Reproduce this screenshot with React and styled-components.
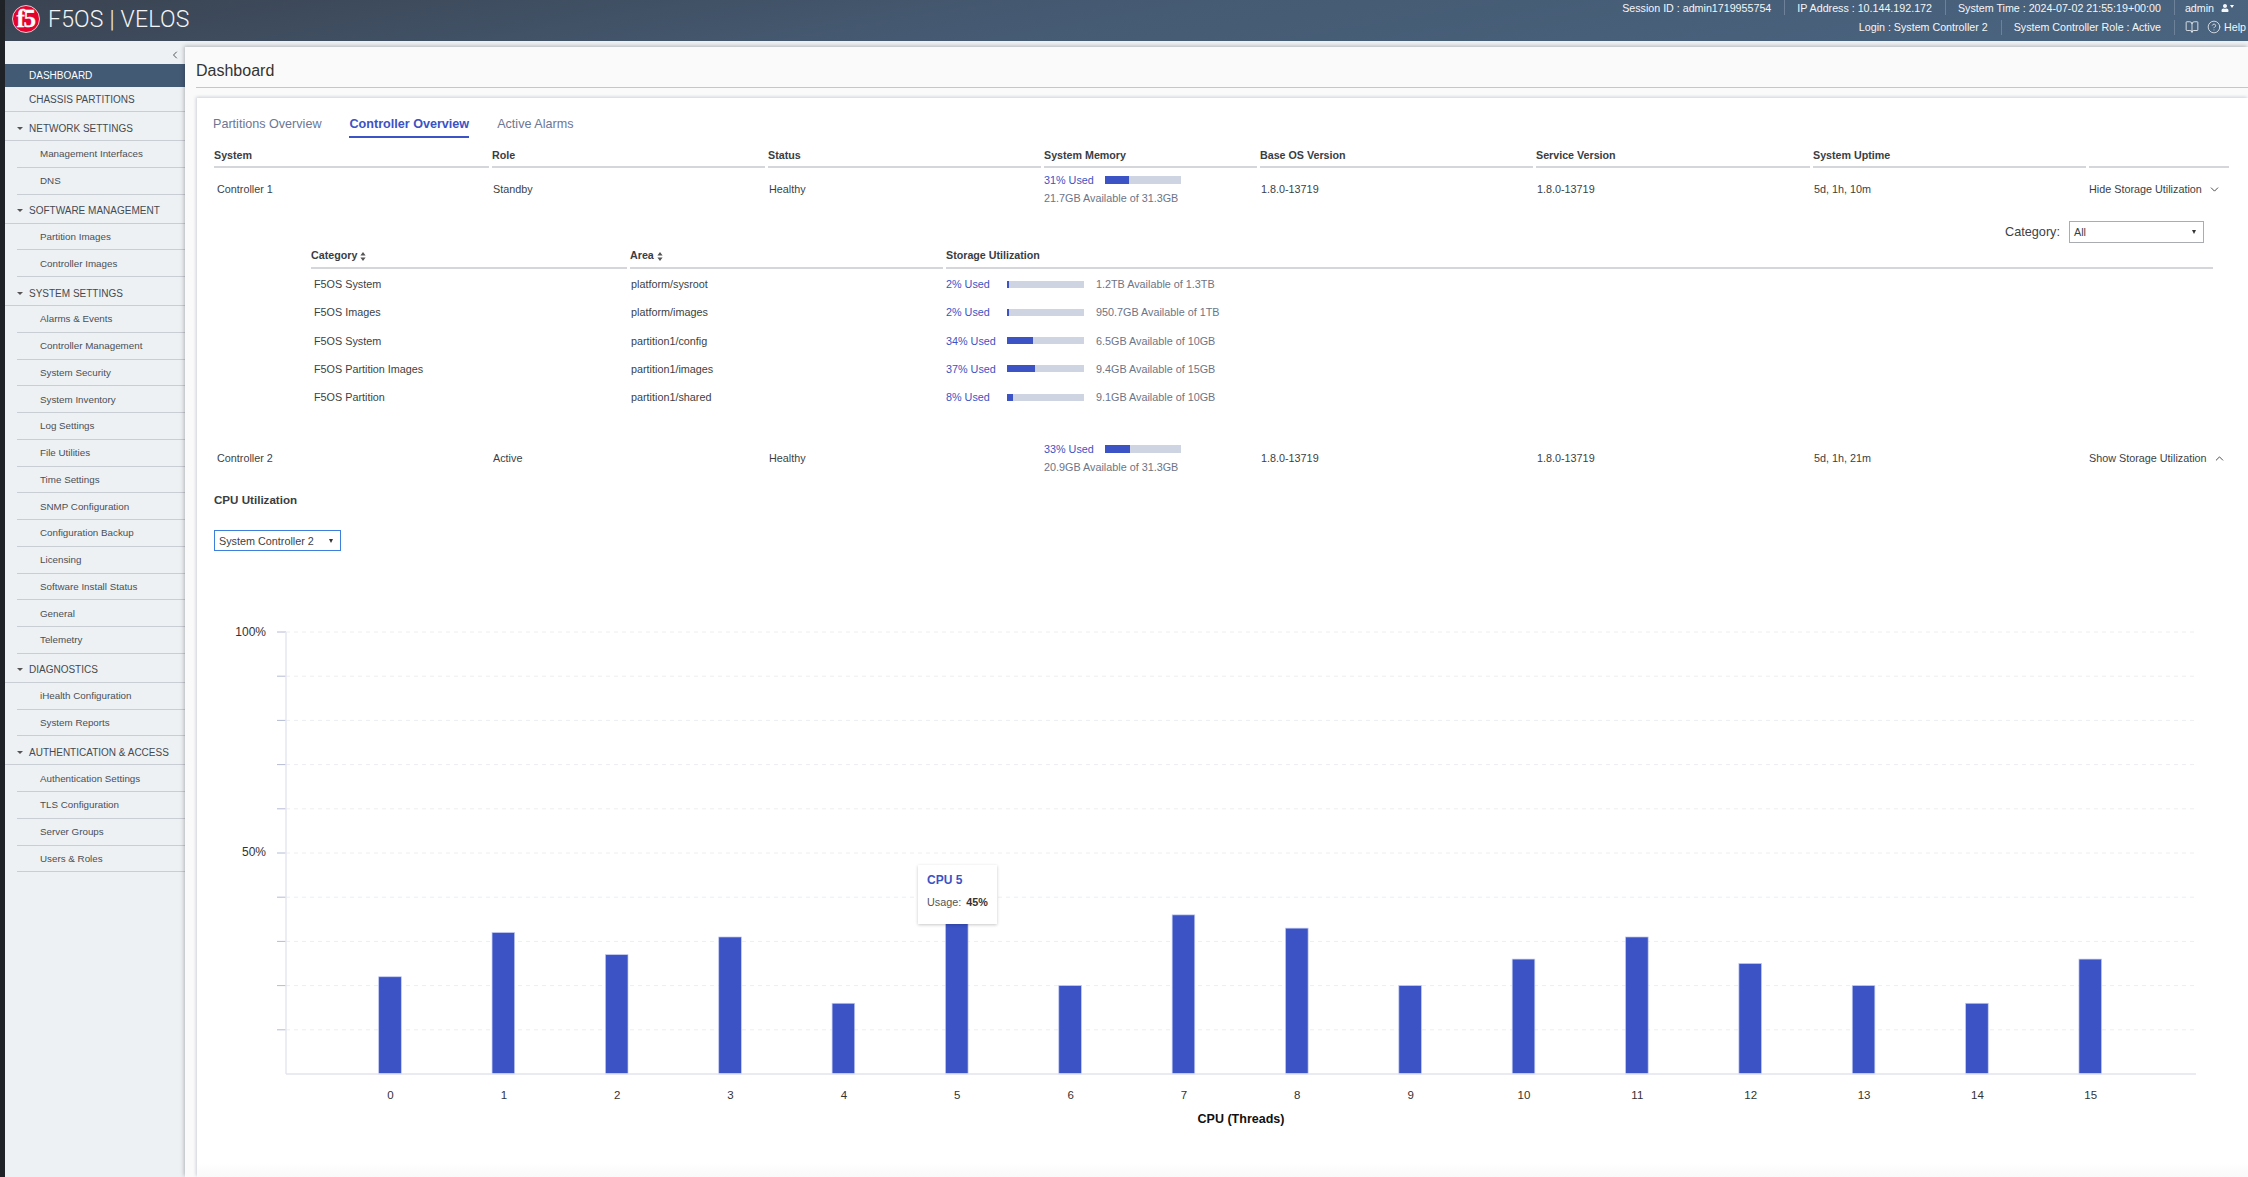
import React from 'react';
import styled, { createGlobalStyle } from 'styled-components';
import { BookOpen, ChevronDown, ChevronLeft, ChevronUp, CircleHelp } from 'lucide-react';
import { FaUser } from 'react-icons/fa';

const BLUE = '#3b53c4';

const GlobalStyle = createGlobalStyle`
  html, body { margin: 0; padding: 0; height: 100%; }
  body { font-family: "Liberation Sans", Arial, sans-serif; background: #1f2328; color: #333; overflow: hidden; }
  * { box-sizing: border-box; }
`;

const Page = styled.div`
  width: 2248px;
  height: 1177px;
  padding-left: 5px;
  display: flex;
  flex-direction: column;
  overflow: hidden;
`;

/* top bar */
const TopBar = styled.header`
  height: 41px;
  flex: none;
  display: flex;
  justify-content: space-between;
  background: linear-gradient(170deg, #3a4351 0%, #455a72 45%, #4a6480 100%);
  color: #fff;
`;

const Brand = styled.div`
  display: flex;
  align-items: center;
  padding: 0 0 3px 7px;
`;

const BrandName = styled.span`
  margin-left: 8px;
  font-family: Roboto, "Liberation Sans", sans-serif;
  font-weight: 300;
  font-size: 23px;
  letter-spacing: 0.2px;
  color: #f2f4f6;
  white-space: pre;
`;

const StatusBlock = styled.div`
  display: flex;
  flex-direction: column;
  align-items: flex-end;
  padding-right: 2px;
`;

const StatusRow = styled.div`
  display: flex;
  align-items: center;
  height: ${props => props.$height}px;
  padding-right: ${props => props.$end}px;
`;

const StatusItem = styled.span`
  display: flex;
  align-items: center;
  gap: ${props => props.$gap || 0}px;
  height: 15px;
  padding: 0 13px 0 12px;
  font-size: 10.7px;
  color: #f4f6f8;
  white-space: nowrap;
  border-left: 1px solid ${props => (props.$first ? 'transparent' : '#6d8299')};

  &:last-child { padding-right: 0; padding-left: 10px; }
`;

const UserCaret = styled.i`
  width: 0;
  height: 0;
  margin-left: -6px;
  margin-top: -3px;
  border-left: 2px solid transparent;
  border-right: 2px solid transparent;
  border-top: 3px solid #fff;
`;

const HelpIcon = styled(CircleHelp)`
  margin-left: 5px;
`;

const Body = styled.div`
  flex: 1;
  min-height: 0;
  display: flex;
  background: #eef1f4;
`;

/* side nav */
const Sidebar = styled.nav`
  width: 180px;
  flex: none;
`;

const CollapseRow = styled.div`
  height: 23px;
  display: flex;
  align-items: center;
  justify-content: flex-end;
  padding: 5px 4px 0 0;
  color: #555;
`;

const TopLink = styled.div`
  height: ${props => (props.$active ? 23 : 25)}px;
  display: flex;
  align-items: center;
  padding-left: 24px;
  font-size: 10px;
  color: ${props => (props.$active ? '#fff' : '#444a50')};
  background: ${props => (props.$active ? '#435a75' : 'transparent')};
  border-bottom: ${props => (props.$active ? 'none' : '1px solid #c9ced4')};
`;

const SectionTitle = styled.div`
  height: 29px;
  display: flex;
  align-items: center;
  padding: 4px 0 0 12px;
  font-size: 10px;
  color: #444a50;
  border-bottom: 1px solid #c9ced4;

  &::before {
    content: "";
    width: 0;
    height: 0;
    margin-right: 6px;
    border-left: 3px solid transparent;
    border-right: 3px solid transparent;
    border-top: 3px solid #555;
  }
`;

const SubLink = styled.div`
  height: 26.75px;
  margin-left: 12px;
  display: flex;
  align-items: center;
  padding-left: 23px;
  font-size: 9.8px;
  color: #4a4f55;
  border-bottom: 1px solid #c9ced4;
`;

/* main */
const Main = styled.main`
  flex: 1;
  min-width: 0;
  margin-top: 6px;
  padding-left: 11px;
  display: flex;
  flex-direction: column;
  background: #fafafa;
  box-shadow: -1px -1px 4px rgba(0, 0, 0, 0.25);
`;

const PageTitle = styled.h1`
  height: 41px;
  flex: none;
  margin: 0;
  display: flex;
  align-items: center;
  padding-top: 8px;
  font-size: 16px;
  font-weight: 400;
  color: #333;
  border-bottom: 1px solid #c4c7ca;
`;

const Card = styled.section`
  flex: 1;
  min-height: 0;
  margin: 10px 0 0 1px;
  padding-left: 17px;
  background: linear-gradient(#fff calc(100% - 14px), #f9f9f9);
  box-shadow: -1px -1px 3px rgba(70, 90, 120, 0.25);
`;

const Tabs = styled.div`
  height: 40px;
  display: flex;
  gap: 28px;
  margin-left: -1px;
`;

const Tab = styled.div`
  height: 40px;
  display: flex;
  align-items: center;
  padding-top: 13px;
  font-size: 12.6px;
  font-weight: ${props => (props.$active ? 700 : 400)};
  color: ${props => (props.$active ? BLUE : '#6b7794')};
  border-bottom: 2px solid ${props => (props.$active ? BLUE : 'transparent')};
`;

const TableGrid = styled.div`
  width: 2014px;
  display: grid;
  grid-template-columns: 275px 273px 273px 213px 273px 274px 273px 140px;
  column-gap: 3px;
`;

const HeadCell = styled.div`
  height: 30px;
  display: flex;
  align-items: flex-end;
  padding-bottom: 5px;
  font-size: 10.7px;
  font-weight: 700;
  color: #3a3d42;
  border-bottom: 2px solid #d4d6d9;
`;

const Cell = styled.div`
  height: 42px;
  display: flex;
  align-items: center;
  padding-left: ${props => props.$pad || 1}px;
  font-size: 10.8px;
  color: #3c3f44;
`;

const MemoryCell = styled.div`
  height: 42px;
  display: flex;
  flex-direction: column;
  justify-content: center;
  gap: 6px;
  font-size: 10.8px;
`;

const UsageLine = styled.div`
  display: flex;
  align-items: center;
  height: 12px;
`;

const UsedText = styled.span`
  width: ${props => props.$width}px;
  flex: none;
  color: ${BLUE};
  font-size: 10.8px;
`;

const MeterTrack = styled.div`
  width: ${props => props.$width}px;
  height: ${props => props.$height}px;
  flex: none;
  background: #cfd4e2;
`;

const MeterFill = styled.div`
  height: 100%;
  background: ${BLUE};
`;

const AvailText = styled.span`
  color: #6c7486;
  font-size: 10.8px;
  white-space: nowrap;
`;

const ToggleCell = styled(Cell)`
  padding-left: 0;
  gap: 6px;
  white-space: nowrap;
`;

const Details = styled.div`
  padding-bottom: 26px;
`;

const FilterRow = styled.div`
  height: 22px;
  margin-top: 11px;
  width: 1990px;
  display: flex;
  justify-content: flex-end;
  align-items: center;
  gap: 9px;
`;

const FilterLabel = styled.label`
  font-size: 12.7px;
  color: #3c3f44;
`;

const SelectBox = styled.div`
  width: ${props => props.$width}px;
  height: ${props => props.$height}px;
  display: flex;
  align-items: center;
  justify-content: space-between;
  padding: 0 7px 0 4px;
  font-size: 10.8px;
  color: #3c3f44;
  background: #fff;
  border: ${props => (props.$focused ? '1.5px solid #3f7fdc' : '1px solid #a9acb0')};

  &::after {
    content: "";
    border-left: 2px solid transparent;
    border-right: 2px solid transparent;
    border-top: 4px solid #333;
  }
`;

const NestedGrid = styled.div`
  width: 1902px;
  margin-left: 97px;
  display: grid;
  grid-template-columns: 316px 313px 1fr;
  column-gap: 3px;
`;

const NestedHead = styled.div`
  height: 26px;
  display: flex;
  align-items: flex-end;
  gap: 3px;
  padding-bottom: 6px;
  font-size: 10.7px;
  font-weight: 700;
  color: #3a3d42;
  border-bottom: 2px solid #d4d6d9;
`;

const NestedRows = styled.div`
  grid-column: 1 / -1;
  margin-top: 1px;
`;

const NestedRow = styled.div`
  height: 28.25px;
  display: grid;
  grid-template-columns: 316px 313px 1fr;
  column-gap: 3px;
  align-items: center;
`;

const NestedText = styled.span`
  padding-left: ${props => props.$pad}px;
  font-size: 10.8px;
  color: #3c3f44;
`;

const StorageUsage = styled.div`
  display: flex;
  align-items: center;
`;

const StorageAvail = styled(AvailText)`
  margin-left: 12px;
`;

const SectionHeading = styled.h2`
  margin: 14px 0 0;
  height: 14px;
  line-height: 14px;
  font-size: 11.6px;
  font-weight: 700;
  color: #3a3d42;
`;

const ControllerPick = styled.div`
  margin-top: 23px;
`;

const ChartWrap = styled.div`
  position: relative;
  width: 2000px;
  height: 540px;
  margin-top: 49px;
`;

const ChartSvg = styled.svg`
  display: block;

  text { font-family: "Liberation Sans", Arial, sans-serif; }
`;

const ChartTip = styled.div`
  position: absolute;
  left: 704px;
  top: 265px;
  width: 79px;
  height: 59px;
  padding: 8px 9px 0;
  background: #fff;
  box-shadow: 0 1px 3px rgba(0, 0, 0, 0.22);
`;

const TipTitle = styled.div`
  font-size: 12px;
  font-weight: 700;
  line-height: 14px;
  color: ${BLUE};
`;

const TipLine = styled.div`
  margin-top: 9px;
  font-size: 10.8px;
  line-height: 12px;
  color: #555;
  white-space: nowrap;

  b { margin-left: 5px; color: #333; }
`;

const NAV_SECTIONS = [
  { title: 'NETWORK SETTINGS', items: ['Management Interfaces', 'DNS'] },
  { title: 'SOFTWARE MANAGEMENT', items: ['Partition Images', 'Controller Images'] },
  {
    title: 'SYSTEM SETTINGS',
    items: [
      'Alarms & Events', 'Controller Management', 'System Security', 'System Inventory',
      'Log Settings', 'File Utilities', 'Time Settings', 'SNMP Configuration',
      'Configuration Backup', 'Licensing', 'Software Install Status', 'General', 'Telemetry',
    ],
  },
  { title: 'DIAGNOSTICS', items: ['iHealth Configuration', 'System Reports'] },
  {
    title: 'AUTHENTICATION & ACCESS',
    items: ['Authentication Settings', 'TLS Configuration', 'Server Groups', 'Users & Roles'],
  },
];

const COLUMNS = ['System', 'Role', 'Status', 'System Memory', 'Base OS Version', 'Service Version', 'System Uptime', ''];

const STORAGE = [
  { category: 'F5OS System', area: 'platform/sysroot', used: 2, avail: '1.2TB Available of 1.3TB' },
  { category: 'F5OS Images', area: 'platform/images', used: 2, avail: '950.7GB Available of 1TB' },
  { category: 'F5OS System', area: 'partition1/config', used: 34, avail: '6.5GB Available of 10GB' },
  { category: 'F5OS Partition Images', area: 'partition1/images', used: 37, avail: '9.4GB Available of 15GB' },
  { category: 'F5OS Partition', area: 'partition1/shared', used: 8, avail: '9.1GB Available of 10GB' },
];

const CPU_USAGE = [22, 32, 27, 31, 16, 45, 20, 36, 33, 20, 26, 31, 25, 20, 16, 26];

// chart coordinates, relative to the chart box
const X0 = 72;
const X1 = 1982;
const Y_TOP = 32;
const Y_BOTTOM = 474;
const PX_PER_PCT = (Y_BOTTOM - Y_TOP) / 100;
const BAR_STEP = 113.35;
const BAR_FIRST = 176;

const F5Logo = () => (
  <svg width="28" height="28" viewBox="0 0 28 28">
    <circle cx="14" cy="14" r="13.5" fill="#e4032e" stroke="#f4f4f4" strokeWidth="0.8" />
    <text
      x="13.5"
      y="21.5"
      textAnchor="middle"
      fontFamily="'Liberation Serif', serif"
      fontWeight="700"
      fontSize="25"
      fill="#fff"
      stroke="#fff"
      strokeWidth="0.3"
      letterSpacing="-1.4"
    >
      f5
    </text>
  </svg>
);

const SortIcon = () => (
  <svg width="6" height="9" viewBox="0 0 6 9">
    <path d="M3 0 L5.6 3.6 H0.4 Z M3 9 L5.6 5.4 H0.4 Z" fill="#555" />
  </svg>
);

const Meter = ({ width, height, used }) => (
  <MeterTrack $width={width} $height={height}>
    <MeterFill style={{ width: `${used}%` }} />
  </MeterTrack>
);

const ControllerRow = ({ name, role, used, avail, uptime, toggle, open }) => (
  <>
    <Cell $pad={3}>{name}</Cell>
    <Cell>{role}</Cell>
    <Cell>{'Healthy'}</Cell>
    <MemoryCell>
      <UsageLine>
        <UsedText $width={61}>{used}% Used</UsedText>
        <Meter width={76} height={8} used={used} />
      </UsageLine>
      <AvailText>{avail}</AvailText>
    </MemoryCell>
    <Cell>1.8.0-13719</Cell>
    <Cell>1.8.0-13719</Cell>
    <Cell>{uptime}</Cell>
    <ToggleCell>
      {toggle}
      {open ? <ChevronDown size={13} strokeWidth={1.6} color="#333" /> : <ChevronUp size={13} strokeWidth={1.6} color="#333" />}
    </ToggleCell>
  </>
);

const CpuChart = () => {
  const ticks = Array.from({ length: 11 }, (_, i) => Y_TOP + i * ((Y_BOTTOM - Y_TOP) / 10));
  return (
    <ChartSvg width="2000" height="540" viewBox="0 0 2000 540">
      {ticks.slice(0, 10).map(y => (
        <g key={y}>
          <line x1={X0} x2={X1} y1={y} y2={y} stroke="#eceef1" strokeDasharray="4 4" />
          <line x1={X0 - 9} x2={X0} y1={y} y2={y} stroke="#b5bbd4" />
        </g>
      ))}
      <line x1={X0} x2={X0} y1={Y_TOP} y2={Y_BOTTOM} stroke="#e4e6f0" strokeWidth="1.5" />
      {CPU_USAGE.map((pct, i) => {
        const h = pct * PX_PER_PCT;
        const cx = BAR_FIRST + i * BAR_STEP;
        return (
          <g key={i}>
            <rect
              x={cx - 11.3}
              y={Y_BOTTOM - h}
              width="22.6"
              height={h}
              fill={BLUE}
              stroke="#c3cbf0"
              strokeWidth="0.7"
            />
            <text x={cx + 0.5} y={499} textAnchor="middle" fontSize="11.5" fill="#333">{i}</text>
          </g>
        );
      })}
      <line x1={X0} x2={X1} y1={Y_BOTTOM} y2={Y_BOTTOM} stroke="#e2e3ee" strokeWidth="1.5" />
      <text x={52} y={36} textAnchor="end" fontSize="12" fill="#333">100%</text>
      <text x={52} y={256} textAnchor="end" fontSize="12" fill="#333">50%</text>
      <text x={1027} y={523} textAnchor="middle" fontSize="12.5" fontWeight="700" fill="#111">CPU (Threads)</text>
    </ChartSvg>
  );
};

const App = () => (
  <>
    <GlobalStyle />
    <Page>
      <TopBar>
        <Brand>
          <F5Logo />
          <BrandName>F5OS | VELOS</BrandName>
        </Brand>
        <StatusBlock>
          <StatusRow $height={15} $end={12}>
            <StatusItem $first>Session ID : admin1719955754</StatusItem>
            <StatusItem>IP Address : 10.144.192.172</StatusItem>
            <StatusItem>System Time : 2024-07-02 21:55:19+00:00</StatusItem>
            <StatusItem $gap={7}>
              admin <FaUser size={8} /><UserCaret />
            </StatusItem>
          </StatusRow>
          <StatusRow $height={24} $end={0}>
            <StatusItem $first>Login : System Controller 2</StatusItem>
            <StatusItem>System Controller Role : Active</StatusItem>
            <StatusItem $gap={3}>
              <BookOpen size={14} strokeWidth={1.4} />
              <HelpIcon size={14} strokeWidth={1.3} />
              Help
            </StatusItem>
          </StatusRow>
        </StatusBlock>
      </TopBar>
      <Body>
        <Sidebar>
          <CollapseRow><ChevronLeft size={12} strokeWidth={2} /></CollapseRow>
          <TopLink $active>DASHBOARD</TopLink>
          <TopLink>CHASSIS PARTITIONS</TopLink>
          {NAV_SECTIONS.map(section => (
            <div key={section.title}>
              <SectionTitle>{section.title}</SectionTitle>
              {section.items.map(item => <SubLink key={item}>{item}</SubLink>)}
            </div>
          ))}
        </Sidebar>
        <Main>
          <PageTitle>Dashboard</PageTitle>
          <Card>
            <Tabs>
              <Tab>Partitions Overview</Tab>
              <Tab $active>Controller Overview</Tab>
              <Tab>Active Alarms</Tab>
            </Tabs>
            <TableGrid>
              {COLUMNS.map((col, i) => <HeadCell key={i}>{col}</HeadCell>)}
              <ControllerRow
                name="Controller 1"
                role="Standby"
                used={31}
                avail="21.7GB Available of 31.3GB"
                uptime="5d, 1h, 10m"
                toggle="Hide Storage Utilization"
                open
              />
            </TableGrid>
            <Details>
              <FilterRow>
                <FilterLabel>Category:</FilterLabel>
                <SelectBox $width={135} $height={22}>All</SelectBox>
              </FilterRow>
              <NestedGrid>
                <NestedHead>Category <SortIcon /></NestedHead>
                <NestedHead>Area <SortIcon /></NestedHead>
                <NestedHead>Storage Utilization</NestedHead>
                <NestedRows>
                  {STORAGE.map(row => (
                    <NestedRow key={row.area}>
                      <NestedText $pad={3}>{row.category}</NestedText>
                      <NestedText $pad={1}>{row.area}</NestedText>
                      <StorageUsage>
                        <UsedText $width={61}>{row.used}% Used</UsedText>
                        <Meter width={77} height={7} used={row.used} />
                        <StorageAvail>{row.avail}</StorageAvail>
                      </StorageUsage>
                    </NestedRow>
                  ))}
                </NestedRows>
              </NestedGrid>
            </Details>
            <TableGrid>
              <ControllerRow
                name="Controller 2"
                role="Active"
                used={33}
                avail="20.9GB Available of 31.3GB"
                uptime="5d, 1h, 21m"
                toggle="Show Storage Utilization"
              />
            </TableGrid>
            <SectionHeading>CPU Utilization</SectionHeading>
            <ControllerPick>
              <SelectBox $width={127} $height={21} $focused>System Controller 2</SelectBox>
            </ControllerPick>
            <ChartWrap>
              <CpuChart />
              <ChartTip>
                <TipTitle>CPU 5</TipTitle>
                <TipLine>Usage:<b>45%</b></TipLine>
              </ChartTip>
            </ChartWrap>
          </Card>
        </Main>
      </Body>
    </Page>
  </>
);

export default App;
